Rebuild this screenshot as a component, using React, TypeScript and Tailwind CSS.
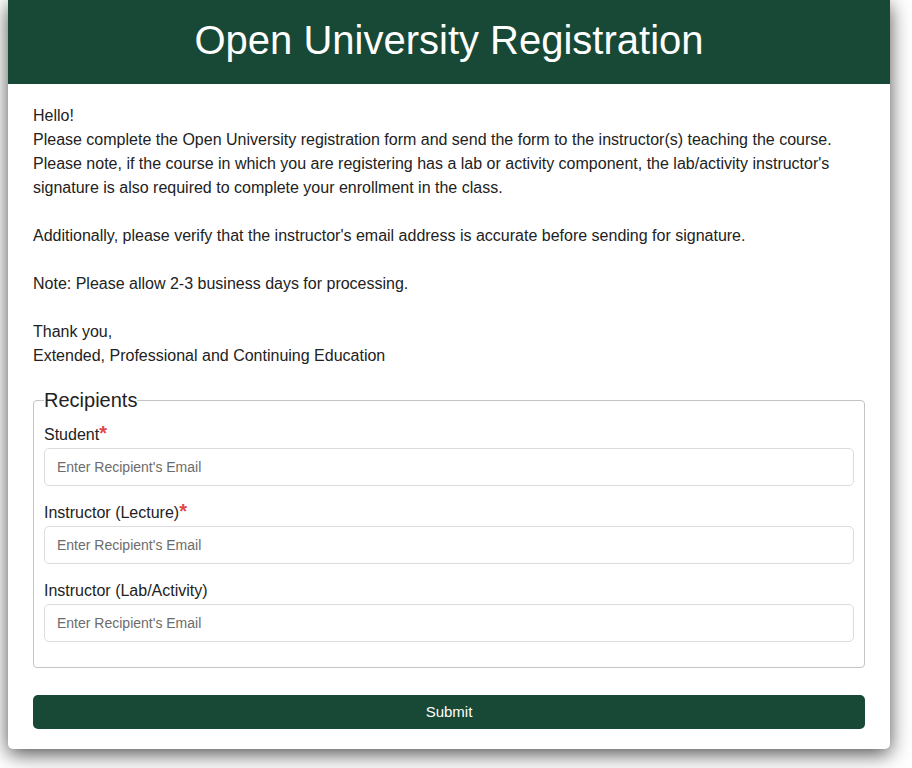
import React from "react";

function Field({ label, required }: { label: string; required?: boolean }) {
  return (
    <div className="mb-[15px]">
      <label className="mb-px block text-[16px] leading-6">
        {label}
        {required && (
          <span className="text-[20px] font-bold leading-none text-[#e0464b]">*</span>
        )}
      </label>
      <input
        type="email"
        placeholder="Enter Recipient's Email"
        className="block h-[38px] w-full rounded-[5px] border border-[#dcdcdc] bg-white px-3 text-[14px] text-[#222] outline-none placeholder:text-[#6c6c6c]"
      />
    </div>
  );
}

export default function App() {
  return (
    <div className="min-h-screen bg-white font-['Liberation_Sans',Arial,sans-serif] text-[#222]">
      <div className="ml-2 w-[882px] rounded-b-[5px] bg-white shadow-[0_5px_20px_rgba(0,0,0,0.7)]">
        <header className="flex h-[84px] items-center justify-center bg-[#184836] pb-1">
          <h1 className="text-[40px] leading-none text-white">Open University Registration</h1>
        </header>
        <div className="px-[25px] pb-5 pt-5">
          <div className="text-[16px] leading-6">
            Hello!
            <br />
            Please complete the Open University registration form and send the form to the instructor(s) teaching the course.
            <br />
            Please note, if the course in which you are registering has a lab or activity component, the lab/activity instructor's signature is also required to complete your enrollment in the class.
            <br />
            <br />
            Additionally, please verify that the instructor's email address is accurate before sending for signature.
            <br />
            <br />
            Note: Please allow 2-3 business days for processing.
            <br />
            <br />
            Thank you,
            <br />
            Extended, Professional and Continuing Education
          </div>
          <fieldset className="mt-5 rounded-[4px] border border-[#c4c4c4] px-[10px] pb-[10px] pt-[11px]">
            <legend className="text-[20px] leading-6">Recipients</legend>
            <Field label="Student" required />
            <Field label="Instructor (Lecture)" required />
            <Field label="Instructor (Lab/Activity)" />
          </fieldset>
          <button className="mt-[27px] block h-[34px] w-full rounded-[5px] bg-[#184836] text-[15px] text-white">
            Submit
          </button>
        </div>
      </div>
    </div>
  );
}
